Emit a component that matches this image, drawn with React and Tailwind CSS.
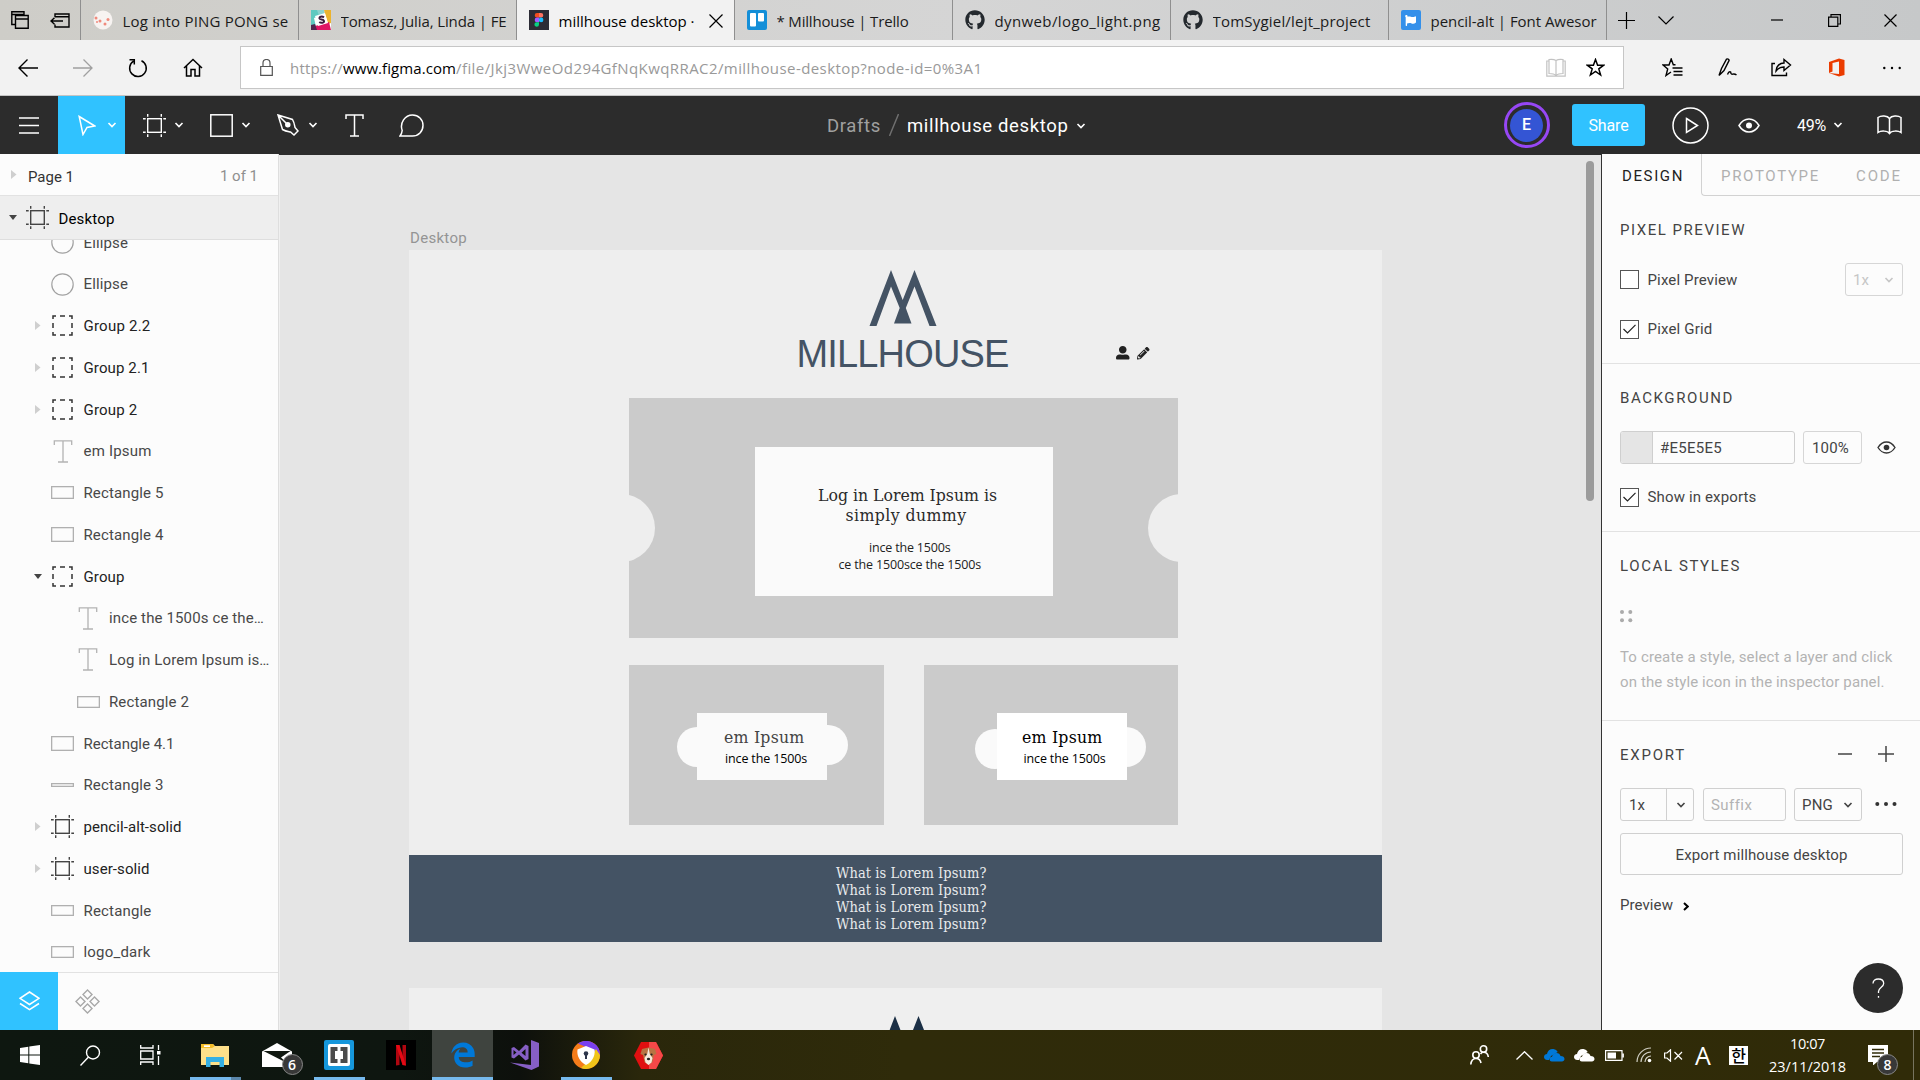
import React, { useLayoutEffect, useRef } from "react";
import { FaGithub, FaUserAlt, FaPencilAlt, FaFlag } from "react-icons/fa";
import { FaEdgeLegacy } from "react-icons/fa6";

/* One line of text whose tracking is adjusted so that it fills the given width. */
function Fit({ w, className = "", children }) {
  const ref = useRef(null);
  useLayoutEffect(() => {
    const el = ref.current;
    el.style.letterSpacing = "0px";
    const natural = el.getBoundingClientRect().width;
    const count = el.textContent.length;
    el.style.letterSpacing = (w - natural) / count + "px";
  }, [w]);
  return (
    <span ref={ref} className={"inline-block shrink-0 whitespace-pre " + className}>
      {children}
    </span>
  );
}

function Svg({ w, h, className = "", sw = 1.5, children }) {
  return (
    <svg width={w} height={h} viewBox={`0 0 ${w} ${h}`} fill="none" stroke="currentColor" strokeWidth={sw} className={"block shrink-0 " + className}>
      {children}
    </svg>
  );
}

const Chevron = ({ className = "" }) => (
  <Svg w={10} h={6} className={className} sw={1.6}>
    <path d="M1.5 1 L5 4.6 L8.5 1" />
  </Svg>
);

const FrameIcon = ({ className = "" }) => (
  <Svg w={23} h={23} className={className} sw={1.4}>
    <rect x="4.7" y="4.7" width="13.6" height="13.6" />
    <path d="M4.7 0V2.7M18.3 0V2.7M4.7 20.3V23M18.3 20.3V23M0 4.7H2.7M0 18.3H2.7M20.3 4.7H23M20.3 18.3H23" />
  </Svg>
);

const TextIcon = ({ className = "" }) => (
  <Svg w={22} h={23} className={className} sw={1.3}>
    <path d="M2.3 5V.9H19.7V5M11 .9V22M6 22H16" />
  </Svg>
);

const EyeIcon = ({ className = "" }) => (
  <Svg w={22} h={15} className={className} sw={1.5}>
    <path d="M1 7.5C4 2.5 7.5 1 11 1s7 1.500 10 6.500C18 12.500 14.500 14 11 14S4 12.500 1 7.500Z" />
    <circle cx="11" cy="7.500" r="3" fill="currentColor" stroke="none" />
  </Svg>
);

/* ---------- Browser ---------- */

const favicons = {
  ping: (
    <Svg w={20} h={20} sw={0}>
      <circle cx="10" cy="10" r="9.500" fill="#f7f3f1" />
      <g fill="#f08a7c"><circle cx="3" cy="8" r="1.500" /><circle cx="7" cy="11" r="1.500" /><circle cx="12" cy="14" r="1.500" /><circle cx="15" cy="9.500" r="1.500" /><circle cx="4" cy="12" r="1" /></g>
    </Svg>
  ),
  slack: (
    <Svg w={20} h={20} sw={0}>
      <rect width="20" height="20" fill="#fff" />
      <path d="M0 0H11L13 5L3 8L5 17L0 18Z" fill="#5fc9c0" />
      <path d="M6 0L8 6L14 4L13 0Z" fill="#8dd3ce" />
      <path d="M13 0H20V13L17 14L14 4Z" fill="#ecb32d" />
      <path d="M4 16L18 12L20 20H3Z" fill="#e01563" />
      <path d="M0 15L4 14L6 20H0Z" fill="#51264f" />
      <path d="M4 6L14 3L17 13L7 16Z" fill="#fff" />
      <path d="M13 7.400C11 6 8 6.500 8.500 8.500C9 10 12.500 9 13 11C13.300 13 10 13.400 8.300 12" stroke="#3d1c3c" strokeWidth="2" fill="none" />
    </Svg>
  ),
  figma: (
    <Svg w={20} h={20} sw={0}>
      <rect width="20" height="20" fill="#2c2c36" />
      <path d="M10 3H8a2.300 2.300 0 0 0 0 4.600h2Z" fill="#f24e1e" />
      <path d="M10 3h2a2.300 2.300 0 0 1 0 4.600h-2Z" fill="#ff7262" />
      <path d="M10 7.600H8a2.300 2.300 0 0 0 0 4.600h2Z" fill="#a259ff" />
      <circle cx="12.100" cy="9.900" r="2.300" fill="#1abcfe" />
      <path d="M10 12.200H8a2.300 2.300 0 1 0 2 2.300Z" fill="#0acf83" />
    </Svg>
  ),
  trello: (
    <Svg w={20} h={20} sw={0}>
      <rect width="20" height="20" rx="2" fill="#148fd8" />
      <rect x="3" y="3" width="6" height="13.500" rx="1" fill="#fff" />
      <rect x="11" y="3" width="6" height="8.500" rx="1" fill="#fff" />
    </Svg>
  ),
  github: <FaGithub size={20} className="shrink-0 text-[#24292e]" />,
  fa: (
    <span className="flex h-5 w-5 shrink-0 items-center justify-center rounded-[2px] bg-[#3490ea] text-white">
      <FaFlag size={11} />
    </span>
  ),
};

const tabs = [
  { icon: "ping", text: "Log into PING PONG se", w: 166 },
  { icon: "slack", text: "Tomasz, Julia, Linda | FE", w: 166 },
  { icon: "figma", text: "millhouse desktop ·", w: 136, active: true },
  { icon: "trello", text: "* Millhouse | Trello", w: 132 },
  { icon: "github", text: "dynweb/logo_light.png", w: 166 },
  { icon: "github", text: "TomSygiel/lejt_project", w: 158 },
  { icon: "fa", text: "pencil-alt | Font Awesor", w: 166 },
];

function TabBar() {
  return (
    <div className="flex h-10 bg-gradient-to-r from-[#cecdc8] via-[#d5d5d5] to-[#c6c8c9] font-['Open_Sans',sans-serif] text-[15px] text-[#1b1b1b]">
      <div className="flex w-[81px] items-center border-r border-[#8f8f8f] pl-[11px]">
        <Svg w={18} h={18} sw={1.4} className="text-black">
          <path d="M4 13.500H.8V.8H13V4M.8 3.500H13" />
          <path d="M4.500 4.500H17.200V17.200H4.500ZM4.500 8H17.200" />
        </Svg>
        <Svg w={20} h={15} sw={1.4} className="ml-[21px] text-black">
          <path d="M5 4V1H19V14H5V11.500M5 3.800H19M1 8H13M4.500 4.800L1 8L4.500 11.200" />
        </Svg>
      </div>
      {tabs.map((t, i) => (
        <div
          key={i}
          className={
            "flex h-10 w-[218px] shrink-0 items-center overflow-hidden border-r border-[#8f8f8f] pl-[11.500px] " +
            (t.active ? "bg-[#f2f2f2] text-black" : "")
          }
        >
          {favicons[t.icon]}
          <span className="ml-[10px] flex w-[167px] overflow-hidden pt-[2px]">
            <Fit w={t.w}>{t.text}</Fit>
            {t.active && (
              <Svg w={14} h={14} sw={1.200} className="ml-[14px] mt-[4px]">
                <path d="M.5 .5L13.500 13.500M13.500 .5L.5 13.500" />
              </Svg>
            )}
          </span>
        </div>
      ))}
      <div className="flex flex-1 items-center text-black">
        <Svg w={17} h={17} sw={1.200} className="ml-[11px]"><path d="M8.500 0V17M0 8.500H17" /></Svg>
        <Svg w={16} h={9} sw={1.200} className="ml-[23px]"><path d="M.5 .5L8 8L15.500 .5" /></Svg>
        <Svg w={12} h={2} sw={1.200} className="ml-[97px]"><path d="M0 1H12" /></Svg>
        <Svg w={13} h={13} sw={1.200} className="ml-[45px]"><path d="M.6 3.100H9.800V12.400H.6ZM3 3V.6H12.400V10H10" /></Svg>
        <Svg w={13} h={13} sw={1.200} className="ml-[43px]"><path d="M.5 .5L12.500 12.500M12.500 .5L.5 12.500" /></Svg>
      </div>
    </div>
  );
}

function AddressBar() {
  return (
    <div className="flex h-14 items-center border-b border-[#c4c4c4] bg-[#f2f2f2] text-black">
      <Svg w={20} h={18} sw={1.400} className="ml-[18px]"><path d="M9.500 .5L1 9L9.500 17.500M1 9H20" /></Svg>
      <Svg w={20} h={18} sw={1.300} className="ml-[35px] text-[#a0a0a0]"><path d="M10.500 .5L19 9L10.500 17.500M0 9H19" /></Svg>
      <Svg w={20} h={20} sw={1.500} className="ml-[35px]"><path d="M5.500 3.200A8.300 8.300 0 1 0 13.500 2.700M1.500 1.700H6.300V6.500" /></Svg>
      <Svg w={20} h={19} sw={1.500} className="ml-[35px]"><path d="M1 10L10 1.500L19 10M3.500 8V18H8V11.500H12V18H16.500V8" /></Svg>
      <div className="ml-[37px] flex h-[43px] w-[1384px] items-center border border-[#c6c6c6] bg-white">
        <Svg w={13} h={17} sw={1.200} className="ml-[19px] text-[#555]"><path d="M.7 7.500H12.300V16.300H.7ZM3 7.500V4a3.500 3.500 0 0 1 7 0V7.500" /></Svg>
        <div className="ml-[17px] flex pt-[1px] font-['Open_Sans',sans-serif] text-[15px] text-[#999]">
          <Fit w={53}>https://</Fit>
          <Fit w={113} className="text-black">www.figma.com</Fit>
          <Fit w={526.5}>/file/Jkj3WweOd294GfNqKwqRRAC2/millhouse-desktop?node-id=0%3A1</Fit>
        </div>
        <div className="flex-1" />
        <Svg w={20} h={19} sw={1.200} className="text-[#c2c2c2]"><path d="M10 2.500V17.500M10 2.500C8 1.200 5 1.200 3 1.500V15.500C5 15.500 8 15.500 10 17.500C12 15.500 15 15.500 17 15.500V1.500C15 1.200 12 1.200 10 2.500M3 3H.8V18.200H19.200V3H17" /></Svg>
        <Svg w={19} h={19} sw={1.500} className="ml-[20px] mr-[18px]"><path d="M9.500 1.500L11.600 7.200H17.700L12.800 10.900L14.600 17L9.500 13.400L4.400 17L6.200 10.900L1.300 7.200H7.400Z" /></Svg>
      </div>
      <Svg w={21} h={19} sw={1.400} className="ml-[38px]"><path d="M13 6.800H11.300L9.200 1L7 7H1L5.700 11L4 17.500L9 14M10.500 10H20.500M11.500 13.500H20.500M11.500 17H20.500M13 6.800H13.500" /></Svg>
      <Svg w={19} h={19} sw={1.400} className="ml-[35px]"><path d="M1 17.500L3.500 10.500L8.500 1.200C9 .4 11.500 1.600 11 2.600L6 12.500L1 17.500M9.500 16.500C11 12.500 13 13.500 13 15.500C14 17.500 15.500 14.500 18.500 17" /></Svg>
      <Svg w={21} h={19} sw={1.400} className="ml-[34px]"><path d="M4 5.500H1V17.500H15.500V14.500M5 13C5 8 9 5 13 5V1.500L19.500 7L13 12.500V9C10 9 7 10 5 13Z" /></Svg>
      <Svg w={16} h={19} sw={0} className="ml-[37px]"><path d="M0 4L10 .5L15.500 2V17L10 18.500L0 15L10 16V3.500L3.500 5V13.500L0 15Z" fill="#eb3c00" /></Svg>
      <Svg w={18} h={4} sw={0} className="ml-[38px]"><g fill="#000"><circle cx="1.300" cy="2" r="1.200" /><circle cx="9" cy="2" r="1.200" /><circle cx="16.700" cy="2" r="1.200" /></g></Svg>
    </div>
  );
}

/* ---------- Figma toolbar ---------- */

function Tool({ active, children }) {
  return (
    <div className={"flex h-[58px] w-[67px] items-center pl-[17px] " + (active ? "bg-[#30c2ff]" : "")}>
      <span className="flex w-6 justify-center">{children}</span>
      <Chevron className="ml-[8px]" />
    </div>
  );
}

function FigmaBar() {
  return (
    <div className="flex h-[59px] bg-[#2c2c2c] font-[Roboto,sans-serif] text-white">
      <div className="flex w-[827px]">
        <div className="flex h-[58px] w-[58px] items-center justify-center">
          <Svg w={20} h={17} sw={1.500}><path d="M0 1H20M0 8.500H20M0 16H20" /></Svg>
        </div>
        <Tool active>
          <Svg w={18} h={21} sw={1.500}><path d="M1.200 1.500L16.800 11L9 12.500L5 19.500Z" /></Svg>
        </Tool>
        <Tool><FrameIcon /></Tool>
        <Tool><Svg w={23} h={23} sw={1.500}><rect x=".8" y=".8" width="21.400" height="21.400" /></Svg></Tool>
        <Tool>
          <Svg w={22} h={22} sw={1.500}><path d="M1 1L15.500 5.500C17.500 9 17.500 11 18 13.500L21 17L17 21L13.500 18C11 17.500 9 17.500 5.500 15.500ZM1 1L10 10" /><circle cx="10.800" cy="10.800" r="2" fill="currentColor" /></Svg>
        </Tool>
        <div className="flex h-[58px] w-[56px] items-center justify-center">
          <Svg w={19} h={23} sw={1.500}><path d="M1 5V1H18V5M9.500 1V22M5 22H14" /></Svg>
        </div>
        <div className="flex h-[58px] w-[58px] items-center justify-center">
          <Svg w={25} h={23} sw={1.500}><path d="M1 22C2.500 20 3 18.500 3.200 16.500C.5 9 6 1 13.500 1C19.500 1 24 5.500 24 11.300C24 17.500 19.500 22 13.500 22Z" /></Svg>
        </div>
      </div>
      <div className="flex h-[58px] w-[676.500px] items-center text-[18.500px]">
        <Fit w={54} className="pt-[3px] text-[#a0a0a0]">Drafts</Fit>
        <Svg w={10} h={22} sw={1.400} className="ml-[8px] text-[#707070]"><path d="M9.500 0L.5 22" /></Svg>
        <Fit w={161.5} className="ml-[8px] pt-[3px]">millhouse desktop</Fit>
        <Chevron className="ml-[7px] mt-[2px]" />
      </div>
      <div className="flex h-[58px] flex-1 items-center">
        <div className="flex h-[46px] w-[46px] items-center justify-center rounded-full border-[3.500px] border-[#9747f5]">
          <div className="flex h-[33px] w-[33px] items-center justify-center rounded-full bg-[#3455d4] text-[16px] font-medium">E</div>
        </div>
        <div className="ml-[22.500px] flex h-[42px] w-[73px] items-center justify-center rounded-[3px] bg-[#30c2ff] text-[16px]">
          <Fit w={40} className="pt-px">Share</Fit>
        </div>
        <Svg w={37} h={37} sw={1.500} className="ml-[27px]"><circle cx="18.500" cy="18.500" r="17.500" /><path d="M14.500 11.500L25.500 18.500L14.500 25.500Z" /></Svg>
        <EyeIcon className="ml-[29px]" />
        <Fit w={29} className="ml-[37px] pt-px text-[16px]">49%</Fit>
        <Chevron className="ml-[7px]" />
        <Svg w={25} h={20} sw={1.500} className="ml-[34px]"><path d="M12.500 3.500C10.500 .5 4 .3 1 2.500V17.500C4 15.500 10.500 15.500 12.500 18.500C14.500 15.500 21 15.500 24 17.500V2.500C21 .3 14.500 .5 12.500 3.500V18.500" /></Svg>
      </div>
    </div>
  );
}

/* ---------- Layers ---------- */

const layers = [
  ["ellipse", "Ellipse", 44.5],
  ["ellipse", "Ellipse", 44.5],
  ["group", "Group 2.2", 67, "closed"],
  ["group", "Group 2.1", 66, "closed"],
  ["group", "Group 2", 54, "closed"],
  ["text", "em Ipsum", 68],
  ["rect12", "Rectangle 5", 80],
  ["rect14", "Rectangle 4", 80],
  ["group", "Group", 41, "open"],
  ["text", "ince the 1500s ce the…", 155, "child"],
  ["text", "Log in Lorem Ipsum is…", 160.5, "child"],
  ["rect11", "Rectangle 2", 80, "child"],
  ["rect14", "Rectangle 4.1", 91],
  ["rect3", "Rectangle 3", 80],
  ["frame", "pencil-alt-solid", 98, "closed"],
  ["frame", "user-solid", 66, "closed"],
  ["rect10", "Rectangle", 68],
  ["rect11", "logo_dark", 67],
];

const boxHeights = { rect12: 12, rect14: 14, rect11: 11, rect10: 10, rect3: 3 };

function LayerIcon({ kind }) {
  if (kind === "ellipse") return <Svg w={23} h={23} sw={1.200} className="text-[#a2a2a2]"><circle cx="11.500" cy="11.500" r="10.700" /></Svg>;
  if (kind === "text") return <TextIcon className="text-[#b3b3b3]" />;
  if (kind === "frame") return <FrameIcon className="text-[#444]" />;
  if (kind === "group")
    return (
      <Svg w={21} h={21} sw={1.500} className="text-[#333]">
        <path d="M1 4V1H4M8 1H13M17 1H20V4M20 8V13M20 17V20H17M13 20H8M4 20H1V17M1 13V8" />
      </Svg>
    );
  const h = boxHeights[kind];
  return (
    <Svg w={23} h={h + 1} sw={1.300} className="text-[#b0b0b0]">
      <rect x=".65" y=".65" width="21.700" height={h - 0.3} />
    </Svg>
  );
}

const ClosedArrow = () => <Svg w={6} h={9} sw={0}><path d="M0 0L5.500 4.500L0 9Z" fill="#cfcfcf" /></Svg>;
const OpenArrow = () => <Svg w={8} h={5} sw={0}><path d="M0 0H8L4 5Z" fill="#444" /></Svg>;

function LeftPanel() {
  return (
    <div className="flex w-[279px] flex-col border-r border-[#dedede] bg-[#fcfcfc] font-[Roboto,sans-serif] text-[15px] text-[#333]">
      <div className="flex h-[42px] items-center border-b border-[#e2e2e2] pl-[11px]">
        <ClosedArrow />
        <Fit w={46} className="ml-[11px] pt-[5px]">Page 1</Fit>
        <Fit w={38} className="ml-[146px] pt-[3px] text-[#8f8f8f]">1 of 1</Fit>
      </div>
      <div className="flex h-[44px] items-center border-b border-[#dedede] bg-[#eeeeee] pl-[9px] text-black">
        <OpenArrow />
        <FrameIcon className="ml-[9px] text-[#444]" />
        <Fit w={56} className="ml-[9.500px] pt-[3px]">Desktop</Fit>
      </div>
      <div className="h-[732px] overflow-hidden">
        <div className="-mt-[18.500px]">
          {layers.map(([kind, name, w, state], i) => (
            <div key={i} className={"flex h-[41.750px] items-center " + (state === "child" ? "pl-[59.500px]" : "pl-[34px]")}>
              <span className="flex w-[8px] justify-center">
                {state === "closed" && <ClosedArrow />}
                {state === "open" && <OpenArrow />}
              </span>
              <span className="ml-[9px] flex w-[23px] justify-center"><LayerIcon kind={kind} /></span>
              <Fit w={w} className={"ml-[9.500px] pt-px " + (kind === "group" || kind === "frame" ? "text-[#222]" : "text-[#484848]")}>{name}</Fit>
            </div>
          ))}
        </div>
      </div>
      <div className="flex h-[58px] border-t border-[#e2e2e2]">
        <div className="-mt-px flex h-[58px] w-[58px] items-center justify-center bg-[#30c2ff] text-white">
          <Svg w={21} h={20} sw={1.500}><path d="M10.500 1L20 7.300L10.500 13.500L1 7.300ZM1 12.500L10.500 18.700L20 12.500" /></Svg>
        </div>
        <div className="flex w-[59px] items-center justify-center text-[#a8a8a8]">
          <Svg w={25} h={25} sw={1.400}>
            <path d="M12.500 1L17 5.500L12.500 10L8 5.500ZM12.500 15L17 19.500L12.500 24L8 19.500ZM5.500 8L10 12.500L5.500 17L1 12.500ZM19.500 8L24 12.500L19.500 17L15 12.500Z" />
          </Svg>
        </div>
      </div>
    </div>
  );
}

/* ---------- Canvas ---------- */

/* Free canvas: every node sits at its own coordinates. */
function Canvas() {
  const serif = "font-['DejaVu_Serif_Condensed','DejaVu_Serif',serif] [font-stretch:condensed]";
  return (
    <div className="relative mt-px flex-1 overflow-hidden border-l border-[#f0f0f0] bg-[#e5e5e5] font-['Open_Sans',sans-serif] text-[#222]">
      <div className="absolute left-[130px] top-[72px] font-[Roboto,sans-serif] text-[15px] text-[#949494]"><Fit w={57}>Desktop</Fit></div>
      <div className="absolute left-[129px] top-[95px] h-[692px] w-[973px] bg-[#eeeeee]">
        <svg className="absolute left-[460px] top-[20px]" width="68" height="57" viewBox="0 0 68 57" fill="#445364">
          <path d="M0.500 56L22 0L33.700 30L45.500 0L67.500 56H60.500L45.500 16.500L36.800 38L42.500 53.500H25L30.700 38L22 16.500L7.500 56Z" />
        </svg>
        <div className="absolute left-[387.500px] top-[82px] font-['Liberation_Sans',sans-serif] text-[38px] leading-[44px] text-[#445364]"><Fit w={212}>MILLHOUSE</Fit></div>
        <FaUserAlt size={13.5} className="absolute left-[707px] top-[96px] text-[#222]" />
        <FaPencilAlt size={12.500} className="absolute left-[728px] top-[97px] text-[#222]" />

        <div className="absolute left-[220px] top-[148px] h-[239.500px] w-[549px] overflow-hidden bg-[#cbcbcb]">
          <div className="absolute -left-[42px] top-[96px] h-[68px] w-[68px] rounded-full bg-[#eeeeee]" />
          <div className="absolute left-[519px] top-[96px] h-[68px] w-[68px] rounded-full bg-[#eeeeee]" />
          <div className="absolute left-[125.500px] top-[49px] h-[149px] w-[298.500px] bg-[#fafafa]" />
        </div>
        <div className={"absolute left-[409px] top-[235px] flex flex-col items-center text-[17.500px] leading-[20px] text-[#2a2a2a] " + serif}>
          <Fit w={179}>Log in Lorem Ipsum is</Fit>
          <Fit w={121} className="-ml-[3px]">simply dummy</Fit>
        </div>
        <div className="absolute left-[429.500px] top-[289px] flex flex-col items-center text-[12.500px] leading-[17px]">
          <Fit w={81.5}>ince the 1500s</Fit>
          <Fit w={142.5}>ce the 1500sce the 1500s</Fit>
        </div>

        <div className="absolute left-[220px] top-[415px] h-[160px] w-[254.500px] bg-[#cbcbcb]">
          <div className="absolute left-[47.500px] top-[62px] h-[40px] w-[40px] rounded-full bg-[#fafafa]" />
          <div className="absolute left-[178px] top-[60px] h-[40px] w-[41px] rounded-full bg-[#fafafa]" />
          <div className="absolute left-[68px] top-[48px] h-[67px] w-[130px] bg-[#fafafa]" />
          <div className={"absolute left-[95px] top-[61px] text-[17.500px] leading-[22px] text-[#444] " + serif}><Fit w={80.5}>em Ipsum</Fit></div>
          <div className="absolute left-[96px] top-[85px] text-[12.500px] leading-[17px] text-black"><Fit w={82}>ince the 1500s</Fit></div>
        </div>
        <div className="absolute left-[515px] top-[415px] h-[160px] w-[254px] bg-[#cbcbcb]">
          <div className="absolute left-[50.500px] top-[64px] h-[40px] w-[40px] rounded-full bg-[#fafafa]" />
          <div className="absolute left-[182px] top-[62px] h-[40px] w-[40px] rounded-full bg-[#fafafa]" />
          <div className="absolute left-[73px] top-[48px] h-[67px] w-[129.500px] bg-white" />
          <div className={"absolute left-[98px] top-[61px] text-[17.500px] leading-[22px] text-black " + serif}><Fit w={80.5}>em Ipsum</Fit></div>
          <div className="absolute left-[99.500px] top-[85px] text-[12.500px] leading-[17px] text-black"><Fit w={82}>ince the 1500s</Fit></div>
        </div>

        <div className="absolute left-0 top-[604.500px] h-[87.500px] w-[973px] bg-[#445364]">
          <div className={"absolute left-[427px] top-[10px] flex flex-col items-start text-[14.500px] leading-[17px] text-[#e9ebed] " + serif}>
            <Fit w={150.5}>What is Lorem Ipsum?</Fit>
            <Fit w={150.5}>What is Lorem Ipsum?</Fit>
            <Fit w={150.5}>What is Lorem Ipsum?</Fit>
            <Fit w={150.5}>What is Lorem Ipsum?</Fit>
          </div>
        </div>
      </div>
      <div className="absolute left-[129px] top-[833px] h-[60px] w-[973px] overflow-hidden bg-[#efefef]">
        <svg className="absolute left-[464px] top-[28px]" width="68" height="57" viewBox="0 0 68 57" fill="#1b2f45">
          <path d="M0.500 56L22 0L33.700 30L45.500 0L67.500 56H60.500L45.500 16.500L36.800 38L42.500 53.500H25L30.700 38L22 16.500L7.500 56Z" />
        </svg>
      </div>
      <div className="absolute left-[1306px] top-[6px] h-[340px] w-[8px] rounded-full bg-[#9b9b9b]" />
    </div>
  );
}

/* ---------- Inspector ---------- */

function Check({ on, w, children }) {
  return (
    <div className="flex h-[20px] items-center">
      <span className="flex h-[19px] w-[19px] items-center justify-center border border-[#555] bg-white">
        {on && <Svg w={13} h={10} sw={1.200} className="text-[#222]"><path d="M.5 5L4.500 9L12.500 .8" /></Svg>}
      </span>
      <Fit w={w} className="ml-[8.500px]">{children}</Fit>
    </div>
  );
}

const Heading = ({ w, children }) => <Fit w={w} className="text-[15px] leading-[20px] text-[#444]">{children}</Fit>;

function RightPanel() {
  return (
    <div className="w-[319px] border-l border-[#333] bg-[#fcfcfc] font-[Roboto,sans-serif] text-[15px] leading-[20px] text-[#444]">
      <div className="flex h-[42px]">
        <div className="flex w-[99px] items-center pl-[20px] pt-[2px] text-[#222]"><Fit w={62}>DESIGN</Fit></div>
        <div className="flex flex-1 items-center rounded-bl-[4px] border-b border-l border-[#d2d2d2] pl-[19px] pt-[2px] text-[#b0b0b0]">
          <Fit w={99}>PROTOTYPE</Fit>
          <Fit w={46} className="ml-[36px]">CODE</Fit>
        </div>
      </div>
      <section className="flex h-[168px] flex-col items-start border-b border-[#e2e2e2] pl-[18px] pt-[24px]">
        <Heading w={126}>PIXEL PREVIEW</Heading>
        <div className="mt-[23px] flex h-[33px] items-center">
          <div className="w-[225px]"><Check w={90}>Pixel Preview</Check></div>
          <div className="flex h-[33px] w-[58px] items-center rounded-[3px] border border-[#d6d6d6] pl-[7px] text-[#c6c6c6]">
            <Fit w={16}>1x</Fit>
            <Chevron className="ml-[15px]" />
          </div>
        </div>
        <div className="mt-[23px]"><Check on w={65}>Pixel Grid</Check></div>
      </section>
      <section className="flex h-[168px] flex-col items-start border-b border-[#e2e2e2] pl-[18px] pt-[24px]">
        <Heading w={114}>BACKGROUND</Heading>
        <div className="mt-[23px] flex h-[33px] items-center">
          <div className="flex h-[33px] w-[175px] items-center overflow-hidden rounded-[3px] border border-[#cfcfcf]">
            <span className="h-full w-[32px] border-r border-[#cfcfcf] bg-[#e5e5e5]" />
            <Fit w={62} className="ml-[7px]">#E5E5E5</Fit>
          </div>
          <div className="ml-[8px] flex h-[33px] w-[59px] items-center rounded-[3px] border border-[#d6d6d6] pl-[8px]"><Fit w={37}>100%</Fit></div>
          <Svg w={19} h={13} sw={1.400} className="ml-[15px] text-[#333]">
            <path d="M1 6.500C3.500 2.500 6 1 9.500 1S15.500 2.500 18 6.500C15.500 10.500 13 12 9.500 12S3.500 10.500 1 6.500Z" />
            <circle cx="9.500" cy="6.500" r="2.800" fill="currentColor" stroke="none" />
          </Svg>
        </div>
        <div className="mt-[23px]"><Check on w={109}>Show in exports</Check></div>
      </section>
      <section className="flex h-[189px] flex-col items-start border-b border-[#e2e2e2] pl-[18px] pt-[24px]">
        <Heading w={121}>LOCAL STYLES</Heading>
        <Svg w={13} h={13} sw={0} className="mt-[34px]"><g fill="#ababab"><circle cx="2" cy="2" r="2" /><circle cx="10.300" cy="2" r="2" /><circle cx="2" cy="10.300" r="2" /><circle cx="10.300" cy="10.300" r="2" /></g></Svg>
        <div className="mt-[22px] flex flex-col items-start leading-[25px] text-[#b3b3b3]">
          <Fit w={272.5}>To create a style, select a layer and click</Fit>
          <Fit w={264.5}>on the style icon in the inspector panel.</Fit>
        </div>
      </section>
      <section className="h-[309px] pl-[18px] pt-[24px]">
        <div className="flex items-center">
          <div className="w-[218px]"><Heading w={66}>EXPORT</Heading></div>
          <Svg w={14} h={16} sw={1.500} className="-mt-[3px]"><path d="M0 8H14" /></Svg>
          <Svg w={16} h={16} sw={1.500} className="-mt-[3px] ml-[26px]"><path d="M0 8H16M8 0V16" /></Svg>
        </div>
        <div className="mt-[23px] flex h-[33px] items-center">
          <div className="flex h-[33px] w-[74px] items-center rounded-[3px] border border-[#d0d0d0]">
            <span className="flex h-full w-[46px] items-center border-r border-[#d0d0d0] pl-[8px]"><Fit w={16}>1x</Fit></span>
            <Chevron className="ml-[9px]" />
          </div>
          <div className="ml-[9px] flex h-[33px] w-[83px] items-center rounded-[3px] border border-[#d0d0d0] pl-[7px] text-[#b3b3b3]"><Fit w={40}>Suffix</Fit></div>
          <div className="ml-[8px] flex h-[33px] w-[68px] items-center rounded-[3px] border border-[#d0d0d0] pl-[7px]">
            <Fit w={31}>PNG</Fit>
            <Chevron className="ml-[10px]" />
          </div>
          <Svg w={22} h={4} sw={0} className="-mt-[2px] ml-[13px]"><g fill="#333"><circle cx="2.300" cy="2" r="2" /><circle cx="11" cy="2" r="2" /><circle cx="19.500" cy="2" r="2" /></g></Svg>
        </div>
        <div className="mt-[12px] flex h-[42px] w-[283px] items-center justify-center rounded-[3px] border border-[#d0d0d0] pt-[2px]"><Fit w={172}>Export millhouse desktop</Fit></div>
        <div className="mt-[20px] flex items-center">
          <Fit w={53}>Preview</Fit>
          <Svg w={6} h={9} sw={2} className="ml-[10px] mt-[3px] text-black"><path d="M1 1L4.700 4.500L1 8" /></Svg>
        </div>
        <div className="ml-[233px] mt-[48px] flex h-[50px] w-[50px] items-center justify-center rounded-full bg-[#2c2c2c] text-white">
          <Svg w={13} h={20} sw={1.300}><path d="M1 5.500C1 2.500 3.500 1 6.300 1C9.500 1 11.700 2.800 11.700 5.500C11.700 9 6.500 9.500 6.500 13.500V15M6.500 18V19.800" /></Svg>
        </div>
      </section>
    </div>
  );
}

/* ---------- Taskbar ---------- */

function TaskItem({ running, split, active, children }) {
  return (
    <div className={"flex h-[50px] shrink-0 flex-col " + (active ? "w-[61px] bg-[#3f443f]" : "w-[62px]")}>
      <div className="flex h-[47px] w-[51px] items-center justify-center self-center pt-[3px]">{children}</div>
      {(running || active) && (
        <div className={"flex h-[3px] self-center bg-[#76b9ed] " + (active ? "w-[61px]" : "w-[51px]")}>
          {split && <span className="ml-auto h-full w-[10px] bg-[#5b86aa]" />}
        </div>
      )}
    </div>
  );
}

function Badge({ children, className = "" }) {
  return (
    <span className={"absolute flex h-[21px] w-[21px] items-center justify-center rounded-full border border-[#888] bg-[#383838] font-['Open_Sans',sans-serif] text-[14px] font-semibold leading-none text-white " + className}>
      {children}
    </span>
  );
}

const Cloud = ({ className = "" }) => (
  <Svg w={21} h={14} sw={0} className={className}>
    <path d="M3.500 12C1 12 0 10.500 0 9C0 7 1.500 6 3 6C3.500 2.500 6.500 .5 9.500 1C11.500 1.300 13 2.500 13.700 4L7 8L5 12Z" fill="currentColor" />
    <path d="M8 13.500C6 13.500 5.500 12 5.600 11C5.700 9.500 7 8.700 8 8.800C8.500 6 10.500 4.800 12.500 5C14.500 5 16 6.300 16.500 8C19 8 20.500 9.300 20.500 11C20.500 12.600 19.300 13.500 18 13.500Z" fill="currentColor" />
  </Svg>
);

function Taskbar() {
  return (
    <div className="flex h-[50px] bg-[linear-gradient(90deg,#0e1710_0px,#0e1610_400px,#0d100c_520px,#2a270b_640px,#2f2b0a_900px,#302b08_1920px)] text-white">
      <div className="flex w-[184px] items-center pl-[20px]">
        <Svg w={20} h={20} sw={0}><path d="M0 3L8.300 1.800V9.500H0ZM9.300 1.600L20 0V9.500H9.300ZM0 10.500H8.300V18.200L0 17ZM9.300 10.500H20V20L9.300 18.400Z" fill="#fff" /></Svg>
        <Svg w={21} h={21} sw={1.400} className="ml-[40px]"><circle cx="13" cy="7.500" r="6.500" /><path d="M8.500 12L.5 20.500" /></Svg>
        <Svg w={21} h={20} sw={1.300} className="ml-[39px]"><path d="M.7 0V3H13V0M.7 6H13V14H.7ZM.7 20V17H13V20M18.500 0V5M18.500 11V20" /><rect x="17" y="6" width="3.500" height="3.500" fill="#fff" stroke="none" /></Svg>
      </div>
      <TaskItem running split>
        <Svg w={28} h={24} sw={0}><path d="M0 1H12L14 3H28V22H0Z" fill="#fee08a" /><path d="M0 1H12L13.500 3.500L11 5H0Z" fill="#f4bd2a" /><path d="M3 2.300H9V4H3Z" fill="#fff" /><path d="M5 24V14H23V24H18.500V19H9.500V24Z" fill="#36b0e4" /></Svg>
      </TaskItem>
      <TaskItem>
        <span className="relative">
          <Svg w={31} h={24} sw={0}><path d="M0 8.500L15 0L30 8.500V24H0Z" fill="#fff" /><path d="M1.500 8H28.500L19 14.500L25 20Z" fill="#101810" /></Svg>
          <Badge className="left-[20px] top-[11px]">6</Badge>
        </span>
      </TaskItem>
      <TaskItem running>
        <Svg w={30} h={30} sw={0}><rect width="30" height="30" rx="2" fill="#1697dc" /><rect x="4" y="4" width="22" height="22" rx="2" fill="#fff" /><path d="M6.500 7H13.500V11H11V19H13.500V23H6.500ZM23.500 7H16.500V11H19V19H16.500V23H23.500Z" fill="#4b4b4b" /></Svg>
      </TaskItem>
      <TaskItem>
        <Svg w={30} h={30} sw={0}><rect width="30" height="30" fill="#000" /><path d="M10 5H13.500V25L10 25.500ZM16.500 5H20V25.500L16.500 25Z" fill="#b00610" /><path d="M10 5H13.500L20 25.500L16.500 25Z" fill="#e50914" /></Svg>
      </TaskItem>
      <TaskItem active><FaEdgeLegacy size={26} className="text-[#0078d7]" /></TaskItem>
      <div className="flex w-[62px] items-center justify-center">
        <Svg w={29} h={30} sw={0}><path d="M21 0L29 3V26.500L21.500 30L0 22.500L21 25Z" fill="#865fc5" /><path d="M1.500 8L4 7L9 11L15.500 4.500L18.500 6V19L15.500 20.500L9 14.500L4 18.500L1.500 17.500ZM3.500 10V15L6.500 12.500ZM11.500 12.700L15.500 16V9Z" fill="#865fc5" fillRule="evenodd" /></Svg>
      </div>
      <TaskItem running>
        <Svg w={28} h={28} sw={0}><circle cx="14" cy="14" r="14" fill="#f57c1a" /><path d="M6 2.500A14 14 0 0 1 28 14L24 17L14 6Z" fill="#7a3ff0" /><path d="M28 14A14 14 0 0 1 9 27L14 22L24 8Z" fill="#f0c419" /><path d="M14 5L22.500 8.500C23.500 15 20 21 14 24C8 21 4.500 15 5.500 8.500Z" fill="#fff" /><circle cx="14" cy="12.500" r="2.300" fill="#2d364c" /><rect x="13" y="13" width="2" height="5" fill="#2d364c" /></Svg>
      </TaskItem>
      <div className="flex w-[62px] items-center justify-center">
        <Svg w={29} h={27} sw={0}><path d="M7 0H22L29 13.500L22 27H7L0 13.500Z" fill="#e01010" /><path d="M15 0H22L29 13.500L22 27H15Z" fill="#f54848" /><path d="M8 7L14.500 5.500L21 7L22.500 12L20 13L18.500 20L14.500 23L10.500 20L9 13L6.500 12Z" fill="#b87443" /><path d="M14.500 5.500L15.800 12L18.500 16L17.500 20.500L14.500 23L11.500 20.500L10.500 16L13.200 12Z" fill="#f6e9dc" /><circle cx="11.500" cy="12.500" r="1.100" fill="#222" /><circle cx="17.500" cy="12.500" r="1.100" fill="#222" /><ellipse cx="14.500" cy="17" rx="1.600" ry="1.200" fill="#222" /></Svg>
      </div>
      <div className="flex-1" />
      <div className="flex w-[450px] shrink-0 items-center">
        <Svg w={19} h={20} sw={1.600}><circle cx="6" cy="10" r="3.200" /><path d="M.8 19.500C1.200 15.500 3 13.500 6 13.500C8.500 13.500 10.500 15 11 18" /><circle cx="13.500" cy="4" r="3.200" /><path d="M10.500 9C11.500 7.500 12.500 7.300 13.500 7.300C16 7.300 18 9 18.300 12" /></Svg>
        <Svg w={17} h={9} sw={1.300} className="ml-[27px]"><path d="M.5 8.500L8.500 .7L16.500 8.500" /></Svg>
        <Cloud className="ml-[11px] text-[#0078d7]" />
        <Cloud className="ml-[9px]" />
        <Svg w={19} h={11} sw={1.200} className="ml-[10px]"><path d="M.6 .6H17V10.400H.6ZM18.300 3.500V7.500" /><rect x="2.500" y="2.500" width="8.500" height="6" fill="#fff" stroke="none" /></Svg>
        <Svg w={16} h={16} sw={1.200} className="ml-[12px] text-[#d0cfc4]"><path d="M1 15A14 14 0 0 1 15 1M5 15A10 10 0 0 1 15 5M9 15A6 6 0 0 1 15 9" /><circle cx="13.500" cy="13.500" r="1.800" fill="#fff" stroke="none" /></Svg>
        <Svg w={19} h={13} sw={1.200} className="ml-[12px]"><path d="M.6 4H3L6.500 .8V12.200L3 9H.6ZM10.500 3L18 10.500M18 3L10.500 10.500" /></Svg>
        <span className="ml-[10px] w-[20px] text-center font-['Open_Sans',sans-serif] text-[25px] leading-[30px]">A</span>
        <span className="ml-[16px] flex h-[19px] w-[19px] items-center justify-center bg-white font-['Noto_Sans_CJK_KR',sans-serif] text-[16px] font-medium leading-[19px] text-black">한</span>
        <div className="ml-[21px] flex w-[77px] flex-col items-center font-['Open_Sans',sans-serif] text-[14.500px] leading-[23px]">
          <Fit w={35}>10:07</Fit>
          <Fit w={77}>23/11/2018</Fit>
        </div>
        <span className="relative ml-[22px]">
          <Svg w={20} h={20} sw={0}><path d="M0 0H20V17H9L5 20.500V17H0Z" fill="#fff" /><path d="M4 4.500H16M4 8H16M4 11.500H12" stroke="#302b08" strokeWidth="1.300" /></Svg>
          <Badge className="left-[9px] top-[9px]">8</Badge>
        </span>
        <div className="ml-[25px] h-[50px] w-px bg-[#77745f]" />
      </div>
    </div>
  );
}

export default function App() {
  return (
    <div className="flex h-[1080px] w-[1920px] flex-col overflow-hidden bg-[#e5e5e5]">
      <TabBar />
      <AddressBar />
      <FigmaBar />
      <div className="-mt-px flex h-[876px]">
        <LeftPanel />
        <Canvas />
        <RightPanel />
      </div>
      <Taskbar />
    </div>
  );
}
